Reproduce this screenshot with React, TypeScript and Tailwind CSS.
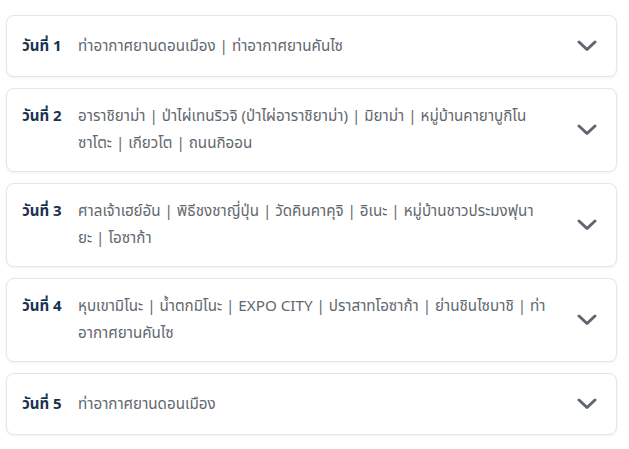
const days = [
  { label: 'วันที่ 1', lines: ['ท่าอากาศยานดอนเมือง | ท่าอากาศยานคันไซ'] },
  {
    label: 'วันที่ 2',
    lines: [
      'อาราชิยาม่า | ป่าไผ่เทนริวจิ (ป่าไผ่อาราชิยาม่า) | มิยาม่า | หมู่บ้านคายาบูกิโน',
      'ซาโตะ | เกียวโต | ถนนกิออน',
    ],
  },
  {
    label: 'วันที่ 3',
    lines: [
      'ศาลเจ้าเฮย์อัน | พิธีชงชาญี่ปุ่น | วัดคินคาคุจิ | อิเนะ | หมู่บ้านชาวประมงฟุนา',
      'ยะ | โอซาก้า',
    ],
  },
  {
    label: 'วันที่ 4',
    lines: [
      'หุบเขามิโนะ | น้ำตกมิโนะ | EXPO CITY | ปราสาทโอซาก้า | ย่านชินไซบาชิ | ท่า',
      'อากาศยานคันไซ',
    ],
  },
  { label: 'วันที่ 5', lines: ['ท่าอากาศยานดอนเมือง'] },
];

function Chevron() {
  return (
    <svg width="20" height="12" viewBox="0 0 20 12" fill="none">
      <path
        d="M2 2 L10 9.5 L18 2"
        stroke="#5f6670"
        strokeWidth="3"
        strokeLinecap="round"
        strokeLinejoin="round"
      />
    </svg>
  );
}

export default function App() {
  return (
    <div
      className="min-h-screen bg-white pt-[15px] pl-[6px]"
      style={{ fontFamily: '"Noto Sans Thai", "Noto Sans", sans-serif' }}
    >
      <div className="flex w-[611px] flex-col gap-[11px]">
        {days.map((day) => (
          <div
            key={day.label}
            className="flex items-center rounded-lg border border-[#e4e6ea] bg-white py-[14px] pl-[15px] pr-[19px] shadow-[0_1px_3px_rgba(0,0,0,0.06)]"
          >
            <div className="flex flex-1 items-start">
              <span className="w-[56px] shrink-0 text-[15px] font-bold leading-[27px] text-[#17324d]">
                {day.label}
              </span>
              <div className="flex flex-col text-[15.2px] leading-[27px] text-[#62676e]">
                {day.lines.map((line) => (
                  <span key={line} className="whitespace-nowrap">
                    {line}
                  </span>
                ))}
              </div>
            </div>
            <div className="flex h-[32px] w-[20px] items-center justify-center">
              <Chevron />
            </div>
          </div>
        ))}
      </div>
    </div>
  );
}
